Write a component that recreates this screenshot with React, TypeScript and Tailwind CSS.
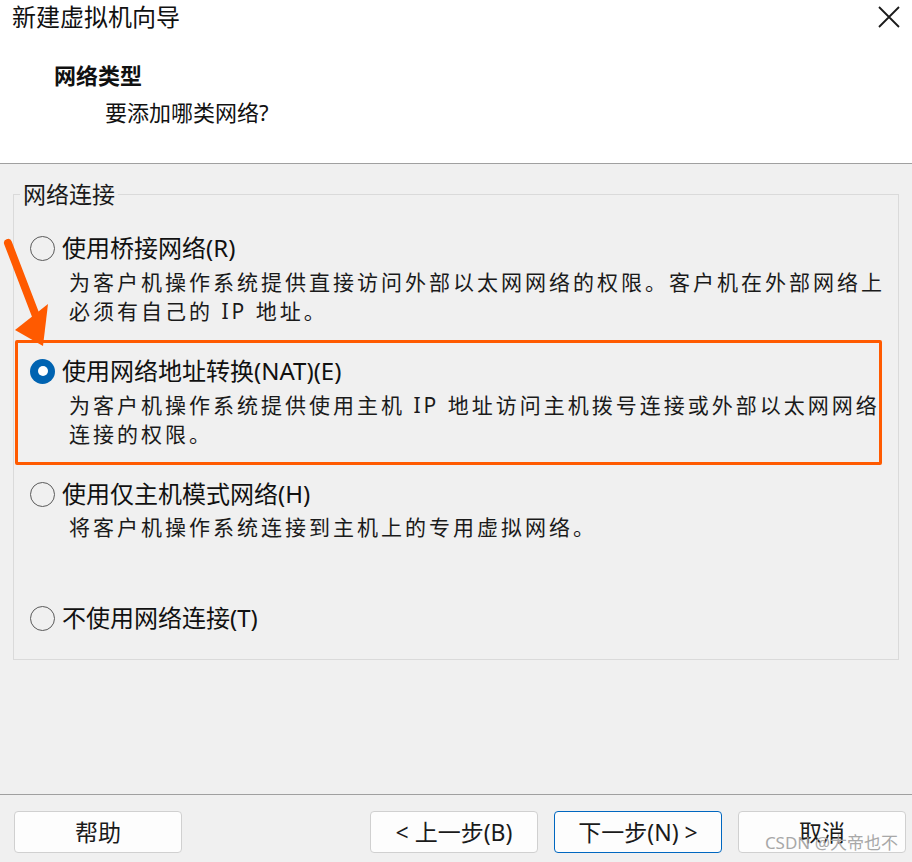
import React, { useState } from "react";

const FONT = { fontFamily: '"Noto Sans", "Noto Sans CJK SC", sans-serif' };

type Opt = { id: string; label: string; desc: string[] };

const options: Opt[] = [
  {
    id: "bridge",
    label: "使用桥接网络(R)",
    desc: ["为客户机操作系统提供直接访问外部以太网网络的权限。客户机在外部网络上", "必须有自己的 IP 地址。"],
  },
  {
    id: "nat",
    label: "使用网络地址转换(NAT)(E)",
    desc: ["为客户机操作系统提供使用主机 IP 地址访问主机拨号连接或外部以太网网络", "连接的权限。"],
  },
  {
    id: "host",
    label: "使用仅主机模式网络(H)",
    desc: ["将客户机操作系统连接到主机上的专用虚拟网络。"],
  },
  { id: "none", label: "不使用网络连接(T)", desc: [] },
];

const Radio: React.FC<{ checked: boolean }> = ({ checked }) =>
  checked ? (
    <span className="w-[25px] h-[25px] rounded-full bg-[#0063b1] flex items-center justify-center shrink-0">
      <span className="w-[10px] h-[10px] rounded-full bg-white" />
    </span>
  ) : (
    <span className="w-[25px] h-[25px] rounded-full border-[1.5px] border-[#5a5a5a] bg-transparent shrink-0" />
  );

const Item: React.FC<{ opt: Opt; checked: boolean; onPick: () => void; descGap: string }> = ({
  opt,
  checked,
  onPick,
  descGap,
}) => (
  <div onClick={onPick} className="cursor-default">
    <div className="h-[30px] flex items-center gap-[7px]">
      <Radio checked={checked} />
      <span className="text-[24px] text-[#111] leading-[30px]">{opt.label}</span>
    </div>
    {opt.desc.length > 0 && (
      <div className={`${descGap} pl-[39px] text-[21px] tracking-[3px] leading-[29px] text-[#1a1a1a] whitespace-nowrap`}>
        {opt.desc.map((l) => (
          <div key={l}>{l}</div>
        ))}
      </div>
    )}
  </div>
);

const Button: React.FC<{ label: string; primary?: boolean }> = ({ label, primary }) => (
  <button
    className={`w-[168px] h-[42px] rounded-[4px] bg-[#fdfdfd] text-[23px] text-[#1a1a1a] border ${
      primary ? "border-[#0067c0]" : "border-[#d0d0d0]"
    }`}
  >
    {label}
  </button>
);

export default function App() {
  const [sel, setSel] = useState("nat");

  return (
    <div className="relative w-[912px] h-[862px] bg-[#f0f0f0] overflow-hidden" style={FONT}>
      {/* Header */}
      <div className="h-[164px] bg-white border-b border-[#a0a0a0]">
        <div className="h-[34px] flex items-center justify-between pl-[12px] pr-[12px]">
          <span className="text-[24px] text-[#111] leading-[34px]">新建虚拟机向导</span>
          <svg width="22" height="22" viewBox="0 0 22 22">
            <path d="M1 1 L21 21 M21 1 L1 21" stroke="#1a1a1a" strokeWidth="1.8" />
          </svg>
        </div>
        <div className="mt-[26px] pl-[54px] h-[30px] leading-[30px] text-[22px] font-bold text-[#111]">网络类型</div>
        <div className="mt-[7px] pl-[105px] h-[30px] leading-[30px] text-[22px] text-[#111]">要添加哪类网络?</div>
      </div>

      {/* Network group */}
      <fieldset className="mt-[15px] mx-[13px] border border-[#dadada] pb-[26px]">
        <legend className="ml-[6px] px-[3px] text-[23px] leading-[30px] text-[#1a1a1a]">网络连接</legend>
        <div className="mt-[24px] pl-[16px]">
          <Item opt={options[0]} checked={sel === "bridge"} onPick={() => setSel("bridge")} descGap="mt-[5px]" />
        </div>
        <div className="mt-[14px] ml-[1px] w-[867px] border-[3px] border-[#ff5a00] rounded-[2px] pt-[13px] pb-[13px] pl-[12px]">
          <Item opt={options[1]} checked={sel === "nat"} onPick={() => setSel("nat")} descGap="mt-[5px]" />
        </div>
        <div className="mt-[14px] pl-[16px]">
          <Item opt={options[2]} checked={sel === "host"} onPick={() => setSel("host")} descGap="mt-[4px]" />
        </div>
        <div className="mt-[61px] pl-[16px]">
          <Item opt={options[3]} checked={sel === "none"} onPick={() => setSel("none")} descGap="" />
        </div>
      </fieldset>

      {/* Footer */}
      <div className="absolute left-0 right-0 top-[794px] border-t border-[#a0a0a0]">
        <div className="mt-[16px] flex items-center pl-[14px] pr-[6px]">
          <Button label="帮助" />
          <div className="ml-auto flex gap-[16px]">
            <Button label="< 上一步(B)" />
            <Button label="下一步(N) >" primary />
            <Button label="取消" />
          </div>
        </div>
      </div>

      {/* annotation arrow */}
      <svg className="absolute left-0 top-[230px] pointer-events-none" width="60" height="120" viewBox="0 230 60 120">
        <path d="M8 243 L36 316" stroke="#ff5a00" strokeWidth="8" strokeLinecap="round" />
        <path d="M15 330 L48 304 L43 346 Z" fill="#ff5a00" />
      </svg>

      {/* watermark */}
      <div className="absolute right-[14px] bottom-[7px] text-[17px] text-[#a8a8a8] pointer-events-none">
        CSDN @大帝也不
      </div>
    </div>
  );
}
